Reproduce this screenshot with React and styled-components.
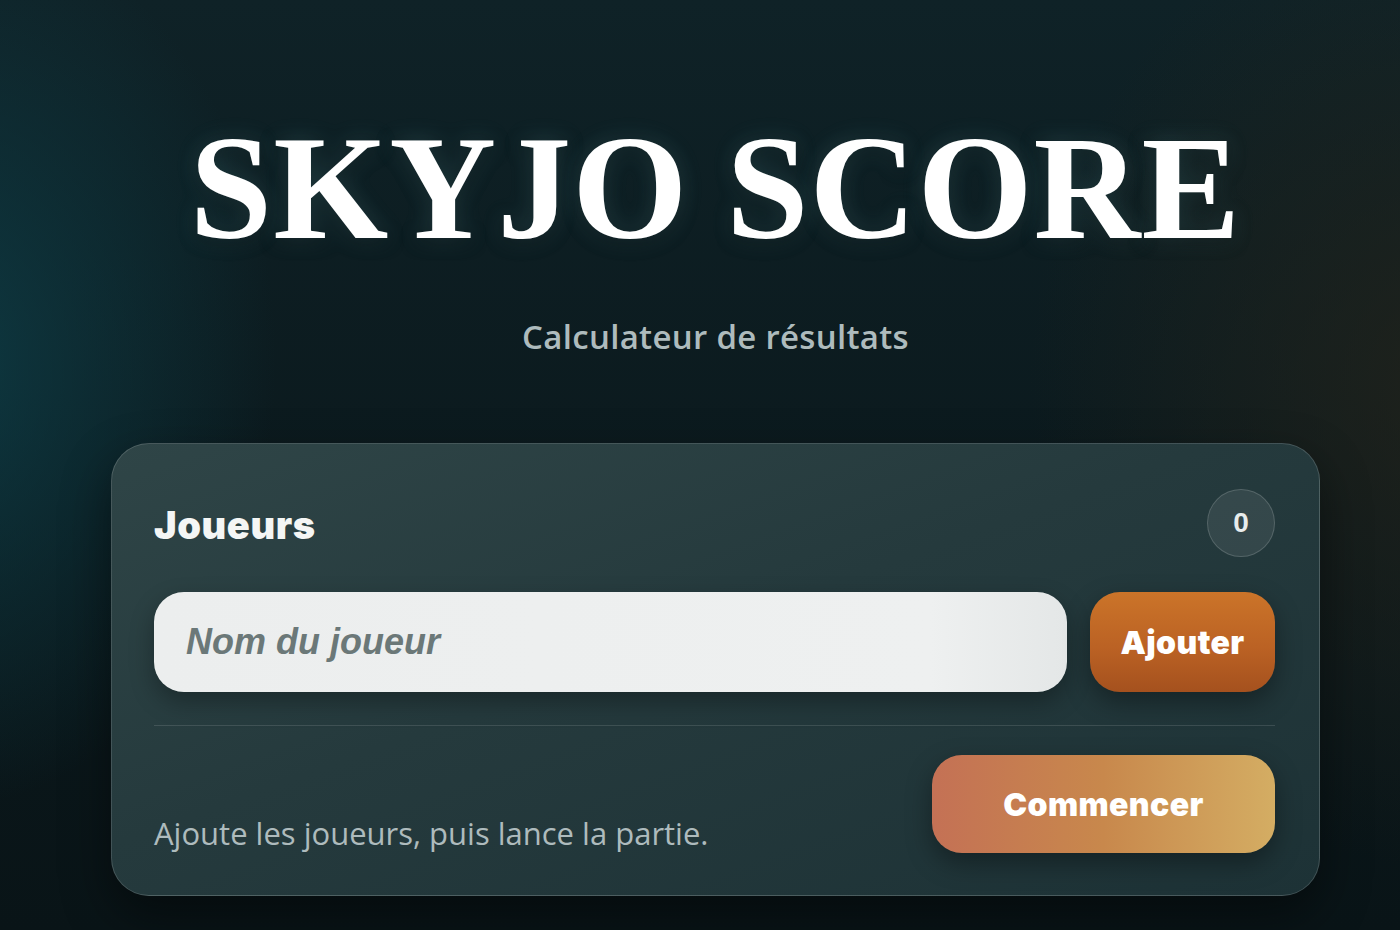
import React, { useState } from 'react';
import styled, { createGlobalStyle } from 'styled-components';

const colors = {
  white: '#ffffff',
  text: '#f4f6f5',
  muted: '#aebbbd',
  placeholder: '#6b7878',
  line: 'rgba(255, 255, 255, 0.12)',
};

const GlobalStyle = createGlobalStyle`
  html, body {
    margin: 0;
    padding: 0;
    background: #0b1a1e;
  }
  * {
    box-sizing: border-box;
  }
`;

const Page = styled.div`
  min-height: 930px;
  padding: 114px 80px 0 111px;
  background:
    radial-gradient(ellipse 480px 640px at -60px 360px, rgba(14, 64, 74, 0.8), transparent 70%),
    radial-gradient(ellipse 600px 700px at 1450px 380px, rgba(38, 36, 26, 0.7), transparent 70%),
    linear-gradient(180deg, #0f2227 0%, #0b191d 55%, #091417 100%);
  font-family: 'Open Sans', 'Noto Sans', sans-serif;
`;

const Main = styled.main`
  display: flex;
  flex-direction: column;
  align-items: center;
  width: 100%;
`;

const Title = styled.h1`
  margin: 0;
  font-family: 'Liberation Serif', 'DejaVu Serif', serif;
  font-size: 148px;
  font-weight: 700;
  line-height: 1;
  letter-spacing: 1px;
  color: ${colors.white};
  text-shadow: 0 0 22px rgba(120, 200, 210, 0.22), 0 4px 16px rgba(0, 0, 0, 0.5);
`;

const Subtitle = styled.p`
  margin: 58px 0 0;
  font-size: 33px;
  font-weight: 600;
  line-height: 1;
  letter-spacing: 0.3px;
  color: ${colors.muted};
`;

const Card = styled.section`
  width: 100%;
  margin-top: 90px;
  padding: 45px 44px 42px 42px;
  border: 1px solid rgba(255, 255, 255, 0.16);
  border-radius: 38px;
  background: linear-gradient(160deg, #2f4547 0%, #253a3d 45%, #1d3236 100%);
  box-shadow: 0 20px 50px rgba(0, 0, 0, 0.45);
`;

const CardHead = styled.div`
  display: flex;
  align-items: center;
  justify-content: space-between;
`;

const SectionTitle = styled.h2`
  margin: 4px 0 0;
  font-family: 'Inter', 'Liberation Sans', sans-serif;
  font-size: 38px;
  font-weight: 900;
  letter-spacing: 0.6px;
  color: ${colors.text};
`;

const CountBadge = styled.span`
  display: flex;
  align-items: center;
  justify-content: center;
  width: 68px;
  height: 68px;
  border-radius: 50%;
  border: 1px solid rgba(255, 255, 255, 0.16);
  background: rgba(255, 255, 255, 0.08);
  font-family: 'Liberation Sans', Arial, sans-serif;
  font-size: 28px;
  font-weight: 700;
  color: #e8ecec;
`;

const AddRow = styled.div`
  display: flex;
  gap: 23px;
  margin-top: 35px;
`;

const NameInput = styled.input`
  flex: 1;
  height: 100px;
  padding: 0 32px;
  border: none;
  border-radius: 30px;
  outline: none;
  background: linear-gradient(90deg, #eceeee 0%, #eef0f0 85%, #e4e7e7 100%);
  box-shadow: 0 10px 24px rgba(0, 0, 0, 0.3);
  font-family: 'Liberation Sans', Arial, sans-serif;
  font-size: 36px;
  font-style: italic;
  font-weight: 700;
  color: #233;

  &::placeholder {
    color: ${colors.placeholder};
  }
`;

const Button = styled.button`
  height: ${(p) => p.$height || 100}px;
  width: ${(p) => p.$width}px;
  border: none;
  border-radius: 30px;
  background: ${(p) =>
    p.$variant === 'start'
      ? 'linear-gradient(90deg, #c47155 0%, #c8884c 50%, #d4ad63 100%)'
      : 'linear-gradient(180deg, #cb7429 0%, #bb6224 55%, #a5511e 100%)'};
  box-shadow: 0 10px 26px rgba(0, 0, 0, 0.35);
  font-family: 'Inter', 'Liberation Sans', sans-serif;
  font-size: 32px;
  font-weight: 900;
  letter-spacing: 0.4px;
  color: ${colors.white};
  cursor: pointer;
`;

const Divider = styled.hr`
  margin: 33px 0 29px;
  border: none;
  border-top: 1px solid ${colors.line};
`;

const CardFoot = styled.div`
  display: flex;
  align-items: flex-end;
  justify-content: space-between;
`;

const Hint = styled.p`
  margin: 0;
  font-size: 31px;
  line-height: 1.3;
  color: ${colors.muted};
`;

export default function App() {
  const [name, setName] = useState('');
  const [players, setPlayers] = useState([]);

  const addPlayer = () => {
    if (!name.trim()) return;
    setPlayers([...players, name.trim()]);
    setName('');
  };

  return (
    <>
      <GlobalStyle />
      <Page>
        <Main>
          <Title>SKYJO SCORE</Title>
          <Subtitle>Calculateur de résultats</Subtitle>
          <Card>
            <CardHead>
              <SectionTitle>Joueurs</SectionTitle>
              <CountBadge>{players.length}</CountBadge>
            </CardHead>
            <AddRow>
              <NameInput
                placeholder="Nom du joueur"
                value={name}
                onChange={(e) => setName(e.target.value)}
              />
              <Button $width={185} onClick={addPlayer}>
                Ajouter
              </Button>
            </AddRow>
            <Divider />
            <CardFoot>
              <Hint>Ajoute les joueurs, puis lance la partie.</Hint>
              <Button $variant="start" $width={343} $height={98}>
                Commencer
              </Button>
            </CardFoot>
          </Card>
        </Main>
      </Page>
    </>
  );
}
